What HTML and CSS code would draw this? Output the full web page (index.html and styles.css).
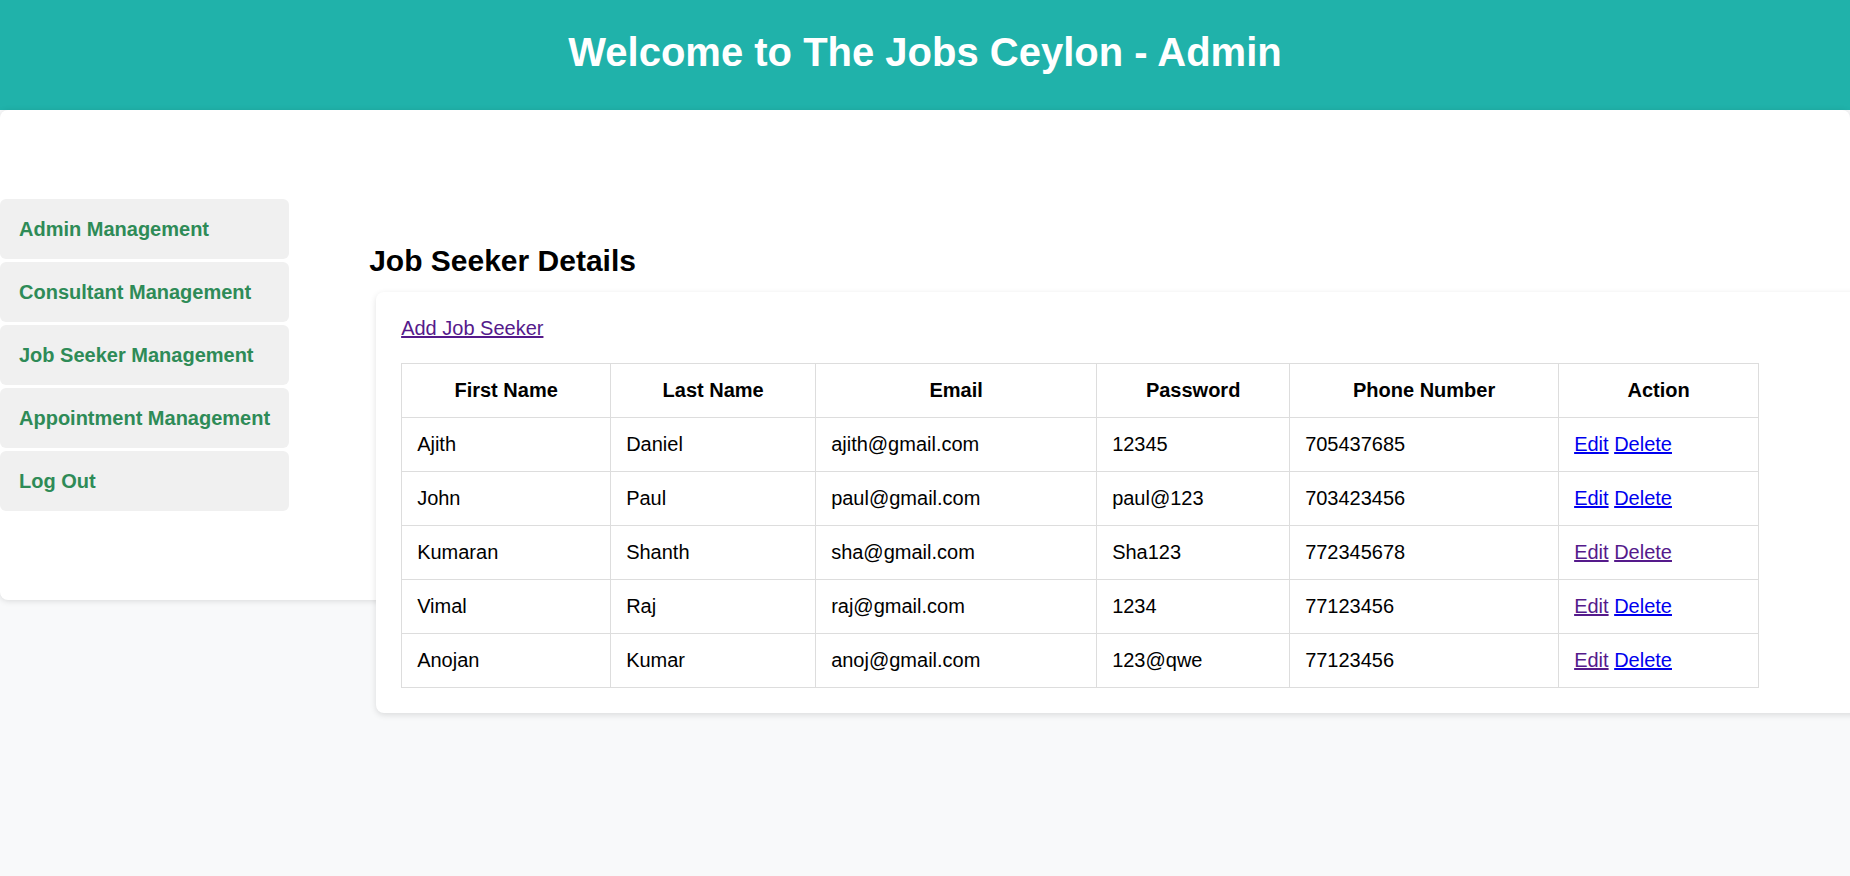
FILE: index.html
```html
<!DOCTYPE html>
<html lang="en">
<head>
<meta charset="utf-8">
<title>The Jobs Ceylon - Admin</title>
<link rel="stylesheet" href="styles.css">
</head>
<body>
<header class="topbar">
  <h1 class="topbar-title">Welcome to The Jobs Ceylon - Admin</h1>
</header>
<div class="shell">
  <nav class="sidebar">
    <a class="nav-item" href="#">Admin Management</a>
    <a class="nav-item" href="#">Consultant Management</a>
    <a class="nav-item" href="#">Job Seeker Management</a>
    <a class="nav-item" href="#">Appointment Management</a>
    <a class="nav-item" href="#">Log Out</a>
  </nav>
  <main class="content">
    <h2 class="section-title">Job Seeker Details</h2>
    <section class="card">
      <div class="card-actions"><a class="link link-visited" href="#">Add Job Seeker</a></div>
      <table class="data-table">
        <colgroup>
          <col class="col-first">
          <col class="col-last">
          <col class="col-email">
          <col class="col-pass">
          <col class="col-phone">
          <col class="col-action">
        </colgroup>
        <thead>
          <tr><th>First Name</th><th>Last Name</th><th>Email</th><th>Password</th><th>Phone Number</th><th>Action</th></tr>
        </thead>
        <tbody>
          <tr><td>Ajith</td><td>Daniel</td><td>ajith@gmail.com</td><td>12345</td><td>705437685</td><td><a class="link" href="#">Edit</a> <a class="link" href="#">Delete</a></td></tr>
          <tr><td>John</td><td>Paul</td><td>paul@gmail.com</td><td>paul@123</td><td>703423456</td><td><a class="link" href="#">Edit</a> <a class="link" href="#">Delete</a></td></tr>
          <tr><td>Kumaran</td><td>Shanth</td><td>sha@gmail.com</td><td>Sha123</td><td>772345678</td><td><a class="link link-visited" href="#">Edit</a> <a class="link link-visited" href="#">Delete</a></td></tr>
          <tr><td>Vimal</td><td>Raj</td><td>raj@gmail.com</td><td>1234</td><td>77123456</td><td><a class="link link-visited" href="#">Edit</a> <a class="link" href="#">Delete</a></td></tr>
          <tr><td>Anojan</td><td>Kumar</td><td>anoj@gmail.com</td><td>123@qwe</td><td>77123456</td><td><a class="link link-visited" href="#">Edit</a> <a class="link" href="#">Delete</a></td></tr>
        </tbody>
      </table>
    </section>
  </main>
</div>
</body>
</html>
```

FILE: styles.css
```css
html, body {
  margin: 0;
  padding: 0;
}

body {
  font-family: "Liberation Sans", Arial, sans-serif;
  font-size: 20px;
  color: #000;
  background: #f8f9fa;
  overflow: hidden;
  height: 876px;
}

.topbar {
  box-sizing: border-box;
  height: 110px;
  background: #20b2aa;
  padding-top: 30px;
  text-align: center;
}

.topbar-title {
  margin: 0;
  color: #fff;
  font-size: 40px;
  font-weight: bold;
}

.shell {
  display: flex;
  align-items: flex-start;
  height: 490px;
  background: #fff;
  border-radius: 8px;
  box-shadow: 0 1px 6px rgba(0, 0, 0, 0.13);
}

.sidebar {
  flex: 0 0 289px;
  display: flex;
  flex-direction: column;
  gap: 3px;
  padding-top: 89px;
}

.nav-item {
  display: block;
  background: #f0f0f0;
  border-radius: 6px;
  padding: 18.5px 19px;
  color: #2e8b57;
  font-weight: bold;
  font-size: 20px;
  white-space: nowrap;
  text-decoration: none;
}

.content {
  margin-left: 80px;
  padding-top: 134px;
}

.section-title {
  margin: 0 0 13.5px;
  font-size: 30px;
  font-weight: bold;
}

.card {
  margin-left: 7px;
  width: 1500px;
  box-sizing: border-box;
  padding: 25px;
  background: #fff;
  border-radius: 8px;
  box-shadow: 0 2px 6px rgba(0, 0, 0, 0.12);
}

.card-actions {
  margin-bottom: 23.5px;
}

.link {
  color: #0000ee;
  text-decoration: underline;
}

.link-visited {
  color: #551a8b;
}

.data-table {
  border-collapse: collapse;
  table-layout: fixed;
  width: 1357px;
}

.col-first { width: 209px; }
.col-last { width: 205px; }
.col-email { width: 281px; }
.col-pass { width: 193px; }
.col-phone { width: 269px; }
.col-action { width: 200px; }

.data-table th,
.data-table td {
  border: 1px solid #ddd;
  padding: 15px;
  line-height: normal;
}

.data-table th {
  font-weight: bold;
  text-align: center;
}

.data-table td {
  text-align: left;
}
```
